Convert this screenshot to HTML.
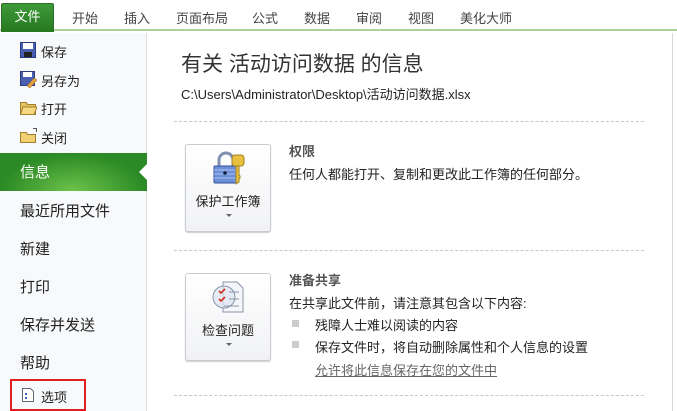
<!DOCTYPE html>
<html><head><meta charset="utf-8"><style>
*{margin:0;padding:0;box-sizing:border-box}
body{width:677px;height:411px;overflow:hidden;background:#fff;font-family:"Liberation Sans","Noto Sans CJK SC",sans-serif;position:relative;color:#333}
.abs{position:absolute;white-space:nowrap}
.tabs{position:absolute;left:0;top:0;width:677px;height:31px;background:#fff;border-bottom:2px solid #a9d39a}
.tab{position:absolute;top:8px;font-size:13px;color:#444}
.file{position:absolute;left:1px;top:3px;width:53px;height:29px;background:linear-gradient(#3f9a3a,#25781f);border:1px solid #2c6e27;border-bottom:none;border-radius:2px 2px 0 0;color:#fff;font-size:13px;text-align:center;line-height:26px}
.side{position:absolute;left:0;top:33px;width:147px;height:378px;background:#f8f9fb;border-right:1px solid #dde0e4}
.si{position:absolute;left:41px;font-size:13px;color:#222}
.big{position:absolute;left:20px;font-size:15px;color:#222}
.sel{position:absolute;left:0;top:153px;width:147px;height:38px;background:radial-gradient(ellipse at 50% 100%,#6cc24a,#2b8a25 70%);}
.dash{position:absolute;left:174px;width:470px;border-top:1px dashed #c8c8c8}
.btn{position:absolute;left:185px;width:86px;height:88px;border:1px solid #c9cbd0;border-radius:3px;background:linear-gradient(#fff,#f1f2f4);box-shadow:0 1px 1px #ccc}
.btn .l{position:absolute;top:46px;width:100%;text-align:center;font-size:13px;color:#222}
.btn .a{position:absolute;top:69px;left:40px;width:0;height:0;border-left:3px solid transparent;border-right:3px solid transparent;border-top:3px solid #666}
.t{font-size:13px;color:#222}
.b{font-size:13px;font-weight:bold;color:#555}
.sq{position:absolute;left:292px;width:7px;height:7px;background:#ccc}
</style></head><body>
<div class="tabs"></div>
<div class="file">文件</div>
<div class="tab" style="left:72px">开始</div>
<div class="tab" style="left:124px">插入</div>
<div class="tab" style="left:176px">页面布局</div>
<div class="tab" style="left:252px">公式</div>
<div class="tab" style="left:304px">数据</div>
<div class="tab" style="left:356px">审阅</div>
<div class="tab" style="left:408px">视图</div>
<div class="tab" style="left:460px">美化大师</div>
<div class="side"></div>
<div class="sel"></div>
<div class="abs" style="left:139px;top:164px;width:0;height:0;border-top:8px solid transparent;border-bottom:8px solid transparent;border-right:8px solid #fff"></div>
<svg class="abs" style="left:20px;top:42px" width="16" height="16"><rect x="0.5" y="0.5" width="15" height="15" fill="#4b5fb0" stroke="#2a3a80"/><rect x="3" y="1" width="10" height="6" fill="#fff"/><rect x="4" y="10" width="8" height="5" fill="#222"/></svg>
<svg class="abs" style="left:20px;top:71px" width="17" height="17"><rect x="0.5" y="0.5" width="14" height="14" fill="#4b5fb0" stroke="#2a3a80"/><rect x="3" y="1" width="9" height="5" fill="#fff"/><path d="M7 15 L14 7 L17 9 L10 17Z" fill="#e0a040" stroke="#906020" stroke-width=".5"/></svg>
<svg class="abs" style="left:20px;top:100px" width="17" height="15"><path d="M0.5 2.5h6l1 2h8v10h-15z" fill="#e8c060" stroke="#a08030"/><path d="M3 7h14l-3 7.5H0.5z" fill="#f5d880" stroke="#a08030"/></svg>
<svg class="abs" style="left:20px;top:128px" width="17" height="15"><path d="M0.5 4.5h6l1 2h8v8h-15z" fill="#f0d070" stroke="#a08030"/><path d="M13 0.5h3.5v3.5" fill="none" stroke="#555"/></svg>
<div class="si" style="top:42px">保存</div>
<div class="si" style="top:71px">另存为</div>
<div class="si" style="top:99px">打开</div>
<div class="si" style="top:128px">关闭</div>
<div class="big" style="top:161px;color:#fff">信息</div>
<div class="big" style="top:200px">最近所用文件</div>
<div class="big" style="top:238px">新建</div>
<div class="big" style="top:276px">打印</div>
<div class="big" style="top:314px">保存并发送</div>
<div class="big" style="top:352px">帮助</div>
<div class="abs" style="left:10px;top:379px;width:76px;height:32px;border:2px solid #e02020"></div>
<svg class="abs" style="left:22px;top:388px" width="12" height="14"><path d="M0.5 0.5h8l3 3v10h-11z" fill="#fff" stroke="#667"/><rect x="3" y="5" width="2" height="2" fill="#4060b0"/><rect x="3" y="9" width="2" height="2" fill="#4060b0"/></svg>
<div class="si" style="top:387px">选项</div>
<div class="abs" style="left:672px;top:33px;width:1px;height:378px;background:#d8d8d8"></div>
<div class="abs" style="left:181px;top:48px;font-size:21px;color:#333">有关 活动访问数据 的信息</div>
<div class="abs t" style="left:181px;top:84px">C:\Users\Administrator\Desktop\活动访问数据.xlsx</div>
<div class="dash" style="top:121px"></div>
<div class="btn" style="top:144px"><svg style="position:absolute;left:24px;top:5px" width="36" height="36"><path d="M9 16v-6a7 7 0 0 1 14 0v6" fill="none" stroke="#8090b0" stroke-width="3"/><rect x="4" y="16" width="22" height="17" rx="1" fill="#6d8fd8" stroke="#3050a0"/><path d="M4 20h22M4 24h22M4 28h22" stroke="#a8c0f0"/><circle cx="15" cy="23" r="1.8" fill="#123"/><rect x="22" y="5" width="12" height="11" rx="3" fill="#e8c040" stroke="#a08020"/><path d="M26 16v18l3-2v-3l1-1v-2l-1-1v-9z" fill="#e8c040" stroke="#a08020"/></svg><div class="l">保护工作簿</div><div class="a"></div></div>
<div class="abs b" style="left:289px;top:141px">权限</div>
<div class="abs t" style="left:289px;top:164px">任何人都能打开、复制和更改此工作簿的任何部分。</div>
<div class="dash" style="top:250px"></div>
<div class="btn" style="top:273px"><svg style="position:absolute;left:24px;top:5px" width="36" height="36"><path d="M13 3h14l6 6v24H13z" fill="#f4f6fa" stroke="#8a94a8"/><circle cx="14" cy="18" r="11" fill="#dde4f0" fill-opacity=".7" stroke="#8a94a8"/><path d="M9 12l2 2 4-4M9 20l2 2 4-4" fill="none" stroke="#d03020" stroke-width="1.6"/><path d="M19 13h10M19 20h10M14 27h15" stroke="#8a94a8"/></svg><div class="l">检查问题</div><div class="a"></div></div>
<div class="abs b" style="left:289px;top:270px">准备共享</div>
<div class="abs t" style="left:289px;top:293px">在共享此文件前，请注意其包含以下内容:</div>
<div class="sq" style="top:320px"></div>
<div class="abs t" style="left:315px;top:315px">残障人士难以阅读的内容</div>
<div class="sq" style="top:341px"></div>
<div class="abs t" style="left:315px;top:337px">保存文件时，将自动删除属性和个人信息的设置</div>
<div class="abs t" style="left:315px;top:360px;color:#666;text-decoration:underline">允许将此信息保存在您的文件中</div>
<div class="dash" style="top:395px"></div>
</body></html>
